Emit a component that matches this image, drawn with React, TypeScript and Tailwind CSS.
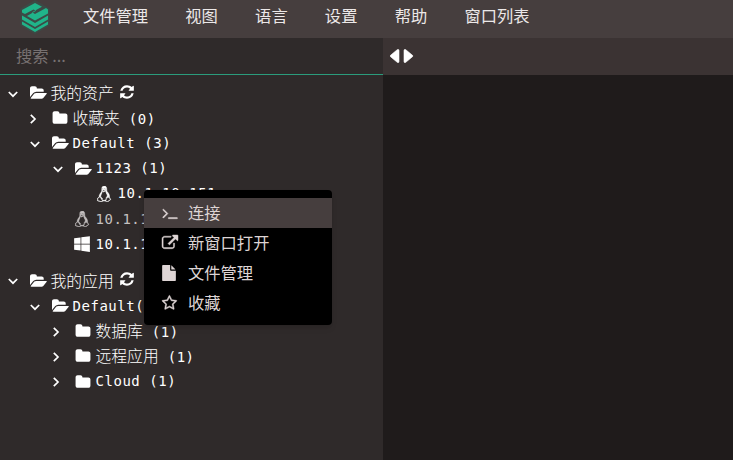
import type { ReactNode } from "react";
import { FaLinux, FaWindows } from "react-icons/fa";

const paths = {
  folder:
    "M1728 608v704q0 92-66 158t-158 66h-1216q-92 0-158-66t-66-158v-960q0-92 66-158t158-66h320q92 0 158 66t66 158v32h672q92 0 158 66t66 158z",
  open: "M1879 952q0 31-31 66l-336 396q-43 51-120.5 86.5t-143.5 35.5h-1088q-34 0-60.5-13t-26.5-43q0-31 31-66l336-396q43-51 120.5-86.5t143.5-35.5h1088q34 0 60.5 13t26.5 43zm-343-344v160h-832q-94 0-197 47.5t-164 119.5l-337 396-5 6q0-4-.5-12.5t-.5-12.5v-960q0-92 66-158t158-66h320q92 0 158 66t66 158v32h544q92 0 158 66t66 158z",
  refresh:
    "M1639 1056q0 5-1 7-64 268-268 434.5t-478 166.5q-146 0-282.5-55t-243.5-157l-129 129q-19 19-45 19t-45-19-19-45v-448q0-26 19-45t45-19h448q26 0 45 19t19 45-19 45l-137 137q71 66 161 102t187 36q134 0 250-65t186-179q11-17 53-117 8-23 30-23h192q13 0 22.5 9.5t9.5 22.5zm25-800v448q0 26-19 45t-45 19h-448q-26 0-45-19t-19-45 19-45l138-138q-148-137-349-137-134 0-250 65t-186 179q-11 17-53 117-8 23-30 23h-199q-13 0-22.5-9.5t-9.5-22.5v-7q65-268 270-434.5t480-166.5q146 0 284 55.5t245 156.5l130-129q19-19 45-19t45 19 19 45z",
  external:
    "M1408 928v320q0 119-84.5 203.5t-203.5 84.5h-832q-119 0-203.5-84.5t-84.5-203.5v-832q0-119 84.5-203.5t203.5-84.5h704q14 0 23 9t9 23v64q0 14-9 23t-23 9h-704q-66 0-113 47t-47 113v832q0 66 47 113t113 47h832q66 0 113-47t47-113v-320q0-14 9-23t23-9h64q14 0 23 9t9 23zm384-864v512q0 26-19 45t-45 19-45-19l-176-176-652 652q-10 10-23 10t-23-10l-114-114q-10-10-10-23t10-23l652-652-176-176q-19-19-19-45t19-45 45-19h512q26 0 45 19t19 45z",
  terminal:
    "M649 983l-466 466q-10 10-23 10t-23-10l-50-50q-10-10-10-23t10-23l393-393-393-393q-10-10-10-23t10-23l50-50q10-10 23-10t23 10l466 466q10 10 10 23t-10 23zm1079 457v64q0 14-9 23t-23 9h-960q-14 0-23-9t-9-23v-64q0-14 9-23t23-9h960q14 0 23 9t9 23z",
  file: "M1152 512v-472q22 14 36 28l408 408q14 14 28 36h-472zm-128 32q0 40 28 68t68 28h544v1056q0 40-28 68t-68 28h-1344q-40 0-68-28t-28-68v-1600q0-40 28-68t68-28h800v544z",
  star: "M1137 1004l306-297-422-62-189-382-189 382-422 62 306 297-73 421 378-199 377 199zm527-357q0 22-26 48l-363 354 86 500q1 7 1 20 0 50-41 50-19 0-40-12l-449-236-449 236q-22 12-40 12-21 0-31.500-14.500t-10.500-35.500q0-6 2-20l86-500-364-354q-25-27-25-48 0-37 56-46l502-73 225-455q19-41 49-41t49 41l225 455 502 73q56 9 56 46z",
};

const outlined = "stroke-current stroke-[50]";

function Glyph({ name, className = "" }: { name: keyof typeof paths; className?: string }) {
  return (
    <svg viewBox="0 0 1792 1792" className={`size-4 shrink-0 overflow-visible fill-current ${className}`}>
      <path d={paths[name]} />
    </svg>
  );
}

function Chevron({ open }: { open: boolean }) {
  return (
    <svg
      viewBox="0 0 10 10"
      className={`mt-0.5 size-2.5 shrink-0 fill-none stroke-current stroke-[1.7] ${open ? "" : "-ml-[2.500px]"}`}
    >
      <path d={open ? "M.8 3 5 7.200 9.200 3" : "M2.800.8 7 5 2.800 9.200"} />
    </svg>
  );
}

function Logo() {
  return (
    <svg viewBox="0 0 30 34" className="-mt-1 h-[34px] w-[30px]">
      <path d="M15 0 29.500 8.500v17L15 34 .5 25.500v-17z" fill="#3c4a46" />
      <g fill="#20b48a">
        <path d="M2 10 15 3l7 3.800-10 5.500 3 1.700L26 8l2 1.500v4L15 20.500l-8-4.500 9-5.200-2.500-1.400L5 14l-3-1.500z" />
        <path d="m2 15.500 13 7.500 13-7.500v4L15 27 2 19.500z" />
        <path d="m2 21.500 13 7.500 13-7.500v3L15 32 2 24.500z" />
      </g>
    </svg>
  );
}

type Node = { level: number; open?: boolean; icon: ReactNode; label: string; refresh?: boolean; dim?: boolean };

const indents = ["pl-2", "pl-[30px]", "pl-[53px]", "pl-[75px]"];

function Row({ level, open, icon, label, refresh, dim }: Node) {
  return (
    <div className={`flex h-[25.2px] items-center whitespace-pre ${indents[level]} ${dim ? "text-[#c4c0c0]" : "text-white"}`}>
      <span className="w-[22px] shrink-0">{open !== undefined && <Chevron open={open} />}</span>
      <span className="flex w-[20.500px] shrink-0 pt-px">{icon}</span>
      <span className="pt-px font-['DejaVu_Sans_Mono','Noto_Sans_CJK_SC',monospace] text-[14px] tracking-[0.54px]">
        {label.split(/([\u4e00-\u9fff]+)/).map((part, i) =>
          i % 2 ? (
            <span key={i} className="font-['Noto_Sans_CJK_SC',sans-serif] text-[15.800px] font-light tracking-normal">
              {part}
            </span>
          ) : (
            part
          ),
        )}
      </span>
      {refresh && <Glyph name="refresh" className="mb-0.5 ml-[5px]" />}
    </div>
  );
}

const opened = <Glyph name="open" />;
const closed = <Glyph name="folder" />;
const linux = <FaLinux className="-ml-px size-4 stroke-current stroke-[16]" />;

const assets: Node[] = [
  { level: 0, open: true, icon: opened, label: "我的资产", refresh: true },
  { level: 1, open: false, icon: closed, label: "收藏夹 (0)" },
  { level: 1, open: true, icon: opened, label: "Default (3)" },
  { level: 2, open: true, icon: opened, label: "1123 (1)" },
  { level: 3, icon: linux, label: "10.1.10.151" },
  { level: 2, icon: linux, label: "10.1.1", dim: true },
  { level: 2, icon: <FaWindows className="-ml-0.5 size-[18px] shrink-0" />, label: "10.1.1" },
];

const apps: Node[] = [
  { level: 0, open: true, icon: opened, label: "我的应用", refresh: true },
  { level: 1, open: true, icon: opened, label: "Default(" },
  { level: 2, open: false, icon: closed, label: "数据库 (1)" },
  { level: 2, open: false, icon: closed, label: "远程应用 (1)" },
  { level: 2, open: false, icon: closed, label: "Cloud (1)" },
];

const actions: { icon: keyof typeof paths; label: string }[] = [
  { icon: "terminal", label: "连接" },
  { icon: "external", label: "新窗口打开" },
  { icon: "file", label: "文件管理" },
  { icon: "star", label: "收藏" },
];

export default function App() {
  return (
    <div className="relative flex h-[460px] w-[733px] flex-col overflow-hidden bg-[#1f1b1b] font-['Noto_Sans_CJK_SC',sans-serif] text-[16.300px]">
      <header className="flex h-[38px] shrink-0 items-center bg-[#463e3e] pl-5 text-[#ece8e8]">
        <Logo />
        <nav className="flex gap-[37.200px] pb-[7px] pl-[33px]">
          {["文件管理", "视图", "语言", "设置", "帮助", "窗口列表"].map((t) => (
            <span key={t}>{t}</span>
          ))}
        </nav>
      </header>
      <div className="flex flex-1">
        <aside className="w-[383px] bg-[#2f2a2a]">
          <div className="flex h-[37px] items-center border-b border-[#2b9c7c] pb-[2px] pl-4 text-[#777171]">搜索 ...</div>
          <div className="pt-[5px]">
            {assets.map((n, i) => (
              <Row key={i} {...n} />
            ))}
          </div>
          <div className="pt-[11.500px]">
            {apps.map((n, i) => (
              <Row key={i} {...n} />
            ))}
          </div>
        </aside>
        <main className="flex-1">
          <div className="flex h-[37px] items-center bg-[#3b3333] pb-px pl-[7px]">
            <svg viewBox="0 0 24 14" className="h-3.5 w-6 fill-white stroke-white stroke-[0.6]">
              <path d="M7.500.5Q9 0 9 1.500v11Q9 14 7.500 13.500L.5 7.700Q-.2 7 .5 6.300zM15.500.5Q14 0 14 1.500v11q0 1.500 1.500 1l7-5.800q.7-.7 0-1.400z" />
            </svg>
          </div>
        </main>
      </div>
      <div className="absolute left-36 top-[190px] h-[135px] w-[188px] rounded-sm bg-black pt-2 text-[#ded5d5] shadow-md">
        {actions.map((a, i) => (
          <div key={a.label} className={`flex h-[30px] items-center gap-[10px] pl-[18px] ${i === 0 ? "bg-[#463e3e]" : ""}`}>
            <Glyph name={a.icon} className={a.icon === "file" ? "-ml-px mr-px" : outlined} />
            <span className="pb-0.5">{a.label}</span>
          </div>
        ))}
      </div>
    </div>
  );
}
